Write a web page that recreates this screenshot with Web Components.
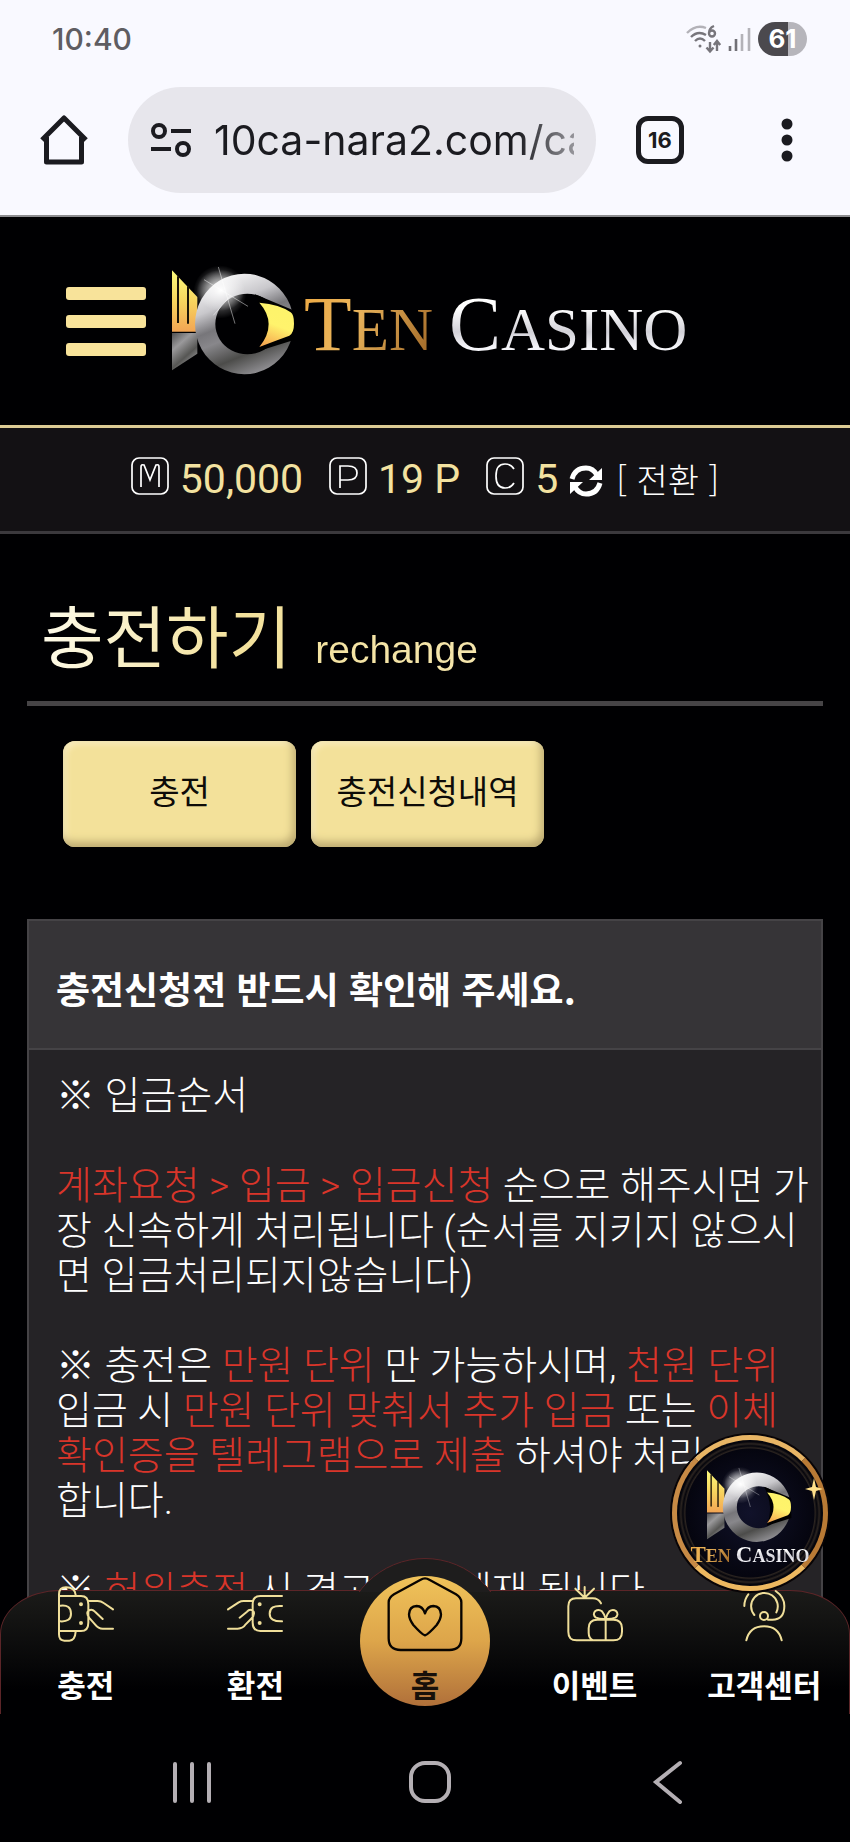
<!DOCTYPE html>
<html lang="ko">
<head>
<meta charset="utf-8">
<meta name="viewport" content="width=device-width, initial-scale=1">
<title>TEN CASINO</title>
<style>
  body {
    margin: 0;
    background: #000002;
    color: #fff;
    font-family: "Noto Sans CJK KR", sans-serif;
  }
</style>
</head>
<body>
<ten-app>
  <phone-status slot="top" time="10:40" battery="61"></phone-status>
  <browser-bar slot="top" url="10ca-nara2.com/ca" tabs="16"></browser-bar>
  <site-header slot="top"></site-header>
  <balance-bar slot="top"></balance-bar>

  <page-title sub="rechange">충전하기</page-title>
  <tab-buttons>
    <gold-button>충전</gold-button>
    <gold-button>충전신청내역</gold-button>
  </tab-buttons>
  <notice-panel>
    <span slot="title">충전신청전 반드시 확인해 주세요.</span>
    ※ 입금순서<br><br>
    <red-text>계좌요청 &gt; 입금 &gt; 입금신청</red-text> 순으로 해주시면 가<br>장 신속하게 처리됩니다 (순서를 지키지 않으시<br>면 입금처리되지않습니다)<br><br>
    ※ 충전은 <red-text>만원 단위</red-text> 만 가능하시며, <red-text>천원 단위</red-text><br>입금 시 <red-text>만원 단위 맞춰서 추가 입금</red-text> 또는 <red-text>이체</red-text><br><red-text>확인증을 텔레그램으로 제출</red-text> 하셔야 처리<br>합니다.<br><br>
    ※ <red-text>허위충전</red-text> 시 경고없이 제재 됩니다
  </notice-panel>

  <bottom-nav slot="bottom"></bottom-nav>
  <round-badge slot="bottom"></round-badge>
  <system-keys slot="bottom"></system-keys>
</ten-app>

<script>
// small helper: every element here is a template in an open shadow root
class BaseElement extends HTMLElement {
  constructor() {
    super();
    this.attachShadow({ mode: "open" });
  }
  connectedCallback() {
    this.shadowRoot.innerHTML = this.render();
  }
}

class TenApp extends BaseElement {
  render() {
    return `
      <style>
        :host { display: flex; flex-direction: column; height: 100vh; position: relative; overflow: hidden; }
        main { flex: 1; min-height: 0; overflow: hidden; padding: 55px 27px 0; }
      </style>
      <slot name="top"></slot>
      <main><slot></slot></main>
      <slot name="bottom"></slot>`;
  }
}
customElements.define("ten-app", TenApp);

class PhoneStatus extends BaseElement {
  render() {
    return `
      <style>
        :host { display: flex; align-items: center; height: 78px; padding: 0 43px 0 52px; background: #f9f9ff; color: #5f5d62; font: 500 30px/32px Inter, sans-serif; }
        .icons { margin-left: auto; display: flex; align-items: center; gap: 6px; }
        .battery { width: 49px; border-radius: 17px; background: linear-gradient(90deg, #4b494e 61%, #b6b5bb 0); color: #fff; font: 700 26px/34px Inter, sans-serif; text-align: center; }
      </style>
      <span>${this.getAttribute("time")}</span>
      <div class="icons">
        <svg width="36" height="30" viewBox="0 0 36 30" fill="none" stroke="#77757b" stroke-width="2.4">
          <path stroke="#b3b2b8" d="M1 9Q10 0 20 4"/>
          <path d="M5 13Q12 6 20 11M9 17Q14 12 19 17M24 18v9M20.500 23.500l3.500 4 3.500-4M31 27v-9M27.800 21l3.200-4 3.200 4"/>
          <circle cx="14" cy="22" r="1.500" fill="#77757b" stroke="none"/>
          <path d="M28 2Q23 4 23 9M23 9.500a3 3 0 1 0 6 0a3 3 0 1 0-6 0"/>
        </svg>
        <svg width="24" height="26" viewBox="0 0 24 26" stroke-width="2.600" stroke="#717076">
          <path d="M2 25v-5M8 25V13"/><path stroke="#b3b2b8" d="M14 25V8M21 25V2"/>
        </svg>
        <span class="battery">${this.getAttribute("battery")}</span>
      </div>`;
  }
}
customElements.define("phone-status", PhoneStatus);

class BrowserBar extends BaseElement {
  render() {
    return `
      <style>
        :host { display: flex; align-items: center; padding: 9px 56px 22px 40px; background: #f9f9ff; border-bottom: 2px solid #8d8d90; color: #1b1b20; }
        button { display: block; padding: 0; border: 0; background: none; color: inherit; }
        svg { display: block; }
        label { flex: 1; min-width: 0; display: flex; align-items: center; gap: 22px; height: 106px; margin: 0 40px; padding: 0 22px; box-sizing: border-box; border-radius: 53px; background: #e7e6ec; }
        label svg { flex: none; }
        input { flex: 1; min-width: 0; padding: 0; border: 0; outline: 0; background: none; color: inherit; font: 400 41px/56px Inter, sans-serif; -webkit-mask: linear-gradient(90deg, #000 84%, #0006); mask: linear-gradient(90deg, #000 84%, #0006); }
        .tabs { box-sizing: border-box; width: 48px; height: 48px; border: 5px solid; border-radius: 12px; font: 700 22px/38px Inter, sans-serif; }
        .more { margin-left: 96px; }
      </style>
      <button aria-label="home"><svg width="48" height="50" viewBox="0 0 48 50" fill="none" stroke="#1b1b20" stroke-width="5" stroke-linejoin="round"><path d="M2 25L24 3l22 22M6.500 22v25h35V22"/></svg></button>
      <label>
        <svg width="42" height="36" viewBox="0 0 42 36" fill="none" stroke="#1b1b20" stroke-width="4"><circle cx="9" cy="9" r="6"/><circle cx="33" cy="27" r="6"/><path d="M21 9h20M1 27h20"/></svg>
        <input type="text" aria-label="address" value="${this.getAttribute("url")}">
      </label>
      <button class="tabs">${this.getAttribute("tabs")}</button>
      <button class="more" aria-label="menu"><svg width="14" height="44" viewBox="0 0 14 44" fill="#1b1b20"><circle cx="7" cy="6" r="5.500"/><circle cx="7" cy="22" r="5.500"/><circle cx="7" cy="38" r="5.500"/></svg></button>`;
  }
}
customElements.define("browser-bar", BrowserBar);

// the silver "10" mark, used in the header and in the round badge
class TenMark extends BaseElement {
  render() {
    return `
      <style>
        :host { display: block; }
        svg { display: block; width: 100%; overflow: visible; }
      </style>
      <svg viewBox="36 40 366 326">
        <defs>
          <linearGradient id="gold" x1="0" y1="0" x2="0" y2="1"><stop offset="0" stop-color="#fbfa7c"/><stop offset=".5" stop-color="#f8d55e"/><stop offset="1" stop-color="#f2a554"/></linearGradient>
          <linearGradient id="eye" x1=".6" y1="0" x2=".3" y2="1"><stop offset="0" stop-color="#fdf36a"/><stop offset=".5" stop-color="#fff36c"/><stop offset="1" stop-color="#f6a850"/></linearGradient>
          <linearGradient id="ring" x1=".2" y1="0" x2=".6" y2="1"><stop offset="0" stop-color="#fff"/><stop offset=".3" stop-color="#c9c8cc"/><stop offset=".48" stop-color="#77767a"/><stop offset=".6" stop-color="#88878b"/><stop offset=".8" stop-color="#4c4c4a"/><stop offset="1" stop-color="#8f8e92"/></linearGradient>
          <linearGradient id="base" x1="0" y1="0" x2=".6" y2="1"><stop offset="0" stop-color="#4f4f50"/><stop offset=".35" stop-color="#9a999b"/><stop offset=".7" stop-color="#565654"/><stop offset="1" stop-color="#a09fa2"/></linearGradient>
          <radialGradient id="glow"><stop offset="0" stop-color="#fff"/><stop offset=".3" stop-color="#fff" stop-opacity=".6"/><stop offset="1" stop-color="#fff" stop-opacity="0"/></radialGradient>
        </defs>
        <path fill="url(#gold)" d="M36 50L112 130V234H36Z"/>
        <path stroke="#1c1508" stroke-width="6" d="M54 68V208M84 98V210"/>
        <path fill="url(#base)" d="M36 238H112V300L36 350Z"/>
        <circle cx="180" cy="115" r="80" fill="url(#glow)" opacity=".7"/>
        <path fill="url(#ring)" fill-rule="evenodd" d="M253 60a148 151 0 1 0 .1 0ZM262 120a96 91 0 1 1-.1 0Z"/>
        <path fill="#000" d="M285 122L400 170L404 258L296 292Q330 210 285 122Z"/>
        <path fill="url(#eye)" d="M298 147Q360 152 392 176Q402 182 402 210Q402 238 388 246Q344 262 298 280Q354 210 298 147Z"/>
        <ellipse cx="182" cy="110" rx="72" ry="62" fill="url(#glow)"/>
        <path stroke="#fff" stroke-width="2" opacity=".7" d="M175 40L225 210M132 78L264 158M212 126L160 185"/>
      </svg>`;
  }
}
customElements.define("ten-mark", TenMark);

class TenName extends BaseElement {
  render() {
    return `
      <style>
        :host { display: flex; gap: var(--name-gap, 16px); font-family: "Liberation Serif", serif; font-size: var(--small, 61px); line-height: 1; white-space: nowrap; }
        span { background: linear-gradient(115deg, #eda943, #e9b45c 40%, #9d6424); -webkit-background-clip: text; background-clip: text; color: transparent; }
        span + span { background-image: linear-gradient(#fff 30%, #d2d1d8 60%, #f5f5fa 80%); }
        b { font-weight: inherit; font-size: var(--big, 78px); }
      </style>
      <span><b>T</b>EN</span><span><b>C</b>ASINO</span>`;
  }
}
customElements.define("ten-name", TenName);

class SiteHeader extends BaseElement {
  render() {
    return `
      <style>
        :host { display: flex; align-items: center; height: 208px; padding: 0 66px; border-bottom: 3px solid #dccb94; }
        button { display: grid; gap: 15px; width: 80px; padding: 0; border: 0; background: none; flex: none; }
        i { height: 13px; border-radius: 3px; background: #f8e39a; }
        a { display: flex; align-items: center; gap: 10px; margin-left: 26px; text-decoration: none; }
        ten-mark { width: 122px; }
        ten-name { padding-top: 6px; }
      </style>
      <button aria-label="menu"><i></i><i></i><i></i></button>
      <a href="#" aria-label="TEN CASINO"><ten-mark></ten-mark><ten-name></ten-name></a>`;
  }
}
customElements.define("site-header", SiteHeader);

class BalanceBar extends BaseElement {
  render() {
    return `
      <style>
        :host { display: flex; align-items: center; justify-content: center; gap: 26px; height: 106px; padding-bottom: 2px; box-sizing: border-box; background: #131114; border-bottom: 3px solid #3b393d; }
        div { display: flex; align-items: center; gap: 11px; color: #f3e2a0; font: 400 41px/48px Roboto, sans-serif; white-space: nowrap; }
        svg { display: block; margin-bottom: 6px; }
        button { padding: 0; border: 0; background: none; color: #fff; font: 300 34px/40px "Noto Sans CJK KR", sans-serif; display: flex; align-items: center; gap: 13px; }
        button svg { margin: 4px 0 0; }
      </style>
      <div>${this.badge("M10 30V10q0-3 3-2l6 15 6-15q3-1 3 2v20")}<span>50,000</span></div>
      <div>${this.badge("M11 31V9h8q9 0 9 7t-9 7h-8")}<span>19 P</span></div>
      <div>${this.badge("M28 12q-3-5-9-5-9 0-9 12t9 12q6 0 9-5")}<span>5</span>
        <button>
          <svg width="34" height="34" viewBox="0 0 34 34" fill="none" stroke="#fff" stroke-width="5"><path d="M3 15Q6 4 17 4q7 0 11 7M31 19Q28 30 17 30q-7 0-11-7"/><path fill="#fff" stroke="none" d="M33 4v12H20zM1 30V18h13z"/></svg>
          [ 전환 ]
        </button>
      </div>`;
  }
  badge(d) {
    return `<svg width="38" height="38" viewBox="0 0 38 38" fill="none" stroke="#fff" stroke-width="1.700"><rect x="1" y="1" width="36" height="36" rx="7"/><path d="${d}"/></svg>`;
  }
}
customElements.define("balance-bar", BalanceBar);

class PageTitle extends BaseElement {
  render() {
    return `
      <style>
        :host { display: block; border-bottom: 5px solid #464446; }
        h1 { display: flex; align-items: baseline; gap: 24px; width: max-content; margin: 0; padding: 0 14px 22px; font-weight: 400; font-size: 68px; line-height: 90px; background: linear-gradient(100deg, #fffef2, #f3e19c 45%, #f5e6ae); -webkit-background-clip: text; background-clip: text; color: transparent; }
        small { font: 400 39px/48px "Liberation Sans", sans-serif; }
      </style>
      <h1><slot></slot><small>${this.getAttribute("sub")}</small></h1>`;
  }
}
customElements.define("page-title", PageTitle);

class TabButtons extends BaseElement {
  render() {
    return `
      <style>
        :host { display: flex; gap: 15px; padding: 35px 36px 72px; }
      </style>
      <slot></slot>`;
  }
}
customElements.define("tab-buttons", TabButtons);

class GoldButton extends BaseElement {
  render() {
    return `
      <style>
        :host { display: block; }
        button { display: block; width: 233px; height: 106px; padding: 0 0 8px; border: 0; border-radius: 12px; background: #f3e19a; box-shadow: inset -3px -5px 8px #bba970, inset 3px 3px 6px #fbf0c4; color: #0d0b08; font: 400 33px/48px "Noto Sans CJK KR", sans-serif; }
      </style>
      <button><slot></slot></button>`;
  }
}
customElements.define("gold-button", GoldButton);

class NoticePanel extends BaseElement {
  render() {
    return `
      <style>
        :host { display: block; border: 2px solid #454346; background: #252326; }
        h2 { margin: 0; padding: 40px 27px 32px; border-bottom: 2px solid #454346; background: #363437; font-size: 37px; line-height: 55px; font-weight: 700; }
        p { margin: 0; padding: 24px 0 100px 27px; font-family: Roboto, "Noto Sans CJK KR", sans-serif; font-size: 39px; line-height: 45px; font-weight: 300; white-space: nowrap; }
      </style>
      <h2><slot name="title"></slot></h2>
      <p><slot></slot></p>`;
  }
}
customElements.define("notice-panel", NoticePanel);

class RedText extends BaseElement {
  render() {
    return `
      <style>
        :host { display: inline; color: #d9352a; }
      </style>
      <slot></slot>`.trim();
  }
}
customElements.define("red-text", RedText);

class NavItem extends BaseElement {
  render() {
    const home = this.hasAttribute("home");
    return `
      <style>
        :host { display: flex; justify-content: center; align-items: flex-end; position: relative; }
        a { display: flex; flex-direction: column; align-items: center; gap: ${home ? 12 : 22}px; color: ${home ? "#17100a" : "#fff"}; font-size: 31px; line-height: 40px; font-weight: 700; text-decoration: none; white-space: nowrap; }
        svg { display: block; fill: none; stroke: ${home ? "#080400" : "#f0df9a"}; stroke-width: ${home ? 7 : 6}; stroke-linecap: round; stroke-linejoin: round; }
      </style>
      <a href="#">
        <svg width="${home ? 76 : 56}" height="${home ? 76 : 56}" viewBox="${this.getAttribute("box")}"><path d="${this.getAttribute("d")}"/></svg>
        <slot></slot>
      </a>`;
  }
}
customElements.define("nav-item", NavItem);

class BottomNav extends BaseElement {
  render() {
    return `
      <style>
        :host { display: block; position: relative; flex: none; height: 124px; margin-top: -40px; }
        nav { position: relative; display: grid; grid-template: 100% / repeat(5, 1fr); align-items: end; height: 100%; box-sizing: border-box; padding-bottom: 10px; border: 1px solid #5c2528; border-bottom: 0; border-radius: 60px 60px 0 0 / 44px 44px 0 0; background: linear-gradient(#1b1b19, #000002 80%); }
        .bump, .disc { position: absolute; left: 50%; transform: translateX(-50%); border-radius: 50%; }
        .bump { top: -33px; width: 164px; height: 164px; box-sizing: border-box; border: 1px solid #5c2528; background: #1e1d1d; clip-path: inset(0 0 130px 0); }
        .disc { top: -15px; width: 130px; height: 130px; background: linear-gradient(#f0c35a, #dda54a 50%, #b0703a); }
      </style>
      <nav>
        <div class="bump"></div>
        <div class="disc"></div>
        <nav-item box="171 135 168 168" d="M174 160V280Q174 299 190 299H205Q222 299 224 272M174 160Q174 139 195 139Q222 139 224 162M178 165H240Q262 165 262 190V245Q262 270 240 270H178M178 194Q210 190 210 218Q210 243 178 241M237 190a3 3 0 1 0 6 0a3 3 0 1 0-6 0M237 246a3 3 0 1 0 6 0a3 3 0 1 0-6 0M262 180H290Q300 180 308 186L336 205M305 234L282 212Q270 200 260 212Q256 220 266 232L282 250Q292 263 305 263H336">충전</nav-item>
        <nav-item box="680 135 168 168" d="M845 165H780Q757 165 757 190V245Q757 270 780 270H845M845 195Q808 192 808 218Q808 242 845 241M775 190a3 3 0 1 0 6 0a3 3 0 1 0-6 0M775 246a3 3 0 1 0 6 0a3 3 0 1 0-6 0M683 205L715 184Q722 180 730 180H757M718 230L740 212Q750 200 760 212Q764 222 752 234L736 250Q728 263 712 263H683">환전</nav-item>
        <nav-item home box="-39 103 228 228" d="M75 110Q82 110 88 114L168 158Q184 168 184 182V290Q184 325 148 325H2Q-34 325-34 290V182Q-34 168-18 158L62 114Q68 110 75 110ZM75 281Q66 279 40 250Q27 232 27 218Q28 194 50 193Q68 193 75 215Q82 193 100 193Q122 194 123 218Q123 232 110 250Q84 279 75 281Z">홈</nav-item>
        <nav-item box="501 135 168 168" d="M603 187Q595 172 578 172H528Q505 172 505 196V272Q505 298 530 298H640Q666 298 666 272V262Q666 236 640 236H592Q566 236 566 262V275Q566 292 580 298M617 236V298M617 234Q600 235 588 230Q576 220 586 210Q596 203 606 211Q614 220 617 234Q620 220 628 211Q638 203 648 210Q658 220 646 230Q634 235 617 234M554 170V138M554 170L526 143M554 170L582 143">이벤트</nav-item>
        <nav-item box="1011 135 168 168" d="M1042 298Q1052 256 1095 256Q1138 256 1148 298M1083 225a12 12 0 1 0 24 0a12 12 0 1 0-24 0M1107 236H1120Q1156 236 1156 195Q1156 168 1130 150M1066 222A40 40 0 1 1 1132 214M1036 195Q1036 175 1048 160">고객센터</nav-item>
      </nav>`;
  }
}
customElements.define("bottom-nav", BottomNav);

// floats over the notice, above the nav
class RoundBadge extends BaseElement {
  render() {
    return `
      <style>
        :host { position: absolute; right: 22px; bottom: 251px; box-sizing: border-box; width: 156px; height: 156px; padding: 28px 0 0; border: 5px solid #d99b4c; border-color: #e8b565 #b97a35 #edb860 #c78a45; border-radius: 50%; background: radial-gradient(circle, #11122a, #05050f 62%, #2b2420 63%, #05050c 65%, #2b2420 67%, #05050c 69%); box-shadow: 0 0 0 2px #080406; --big: 23px; --small: 18px; --name-gap: 5px; font-weight: 700; }
        ten-mark { width: 84px; margin-left: 30px; }
        ten-name { justify-content: center; }
        svg { position: absolute; right: 0; top: 38px; }
      </style>
      <ten-mark></ten-mark>
      <ten-name></ten-name>
      <svg width="18" height="22" viewBox="0 0 18 22" fill="#ffe08a"><path d="M9 0l2 9 7 2-7 2-2 9-2-9-7-2 7-2z"/></svg>`;
  }
}
customElements.define("round-badge", RoundBadge);

class SystemKeys extends BaseElement {
  render() {
    return `
      <style>
        :host { display: grid; grid-template-columns: repeat(3, 1fr); place-items: center; flex: none; height: 128px; padding: 8px 63px 0 73px; box-sizing: border-box; background: #000002; }
        button { display: block; padding: 0; border: 0; background: none; }
        svg { display: block; fill: none; stroke: #b4afb4; stroke-width: 4; stroke-linecap: round; }
      </style>
      <button aria-label="recent"><svg width="44" height="44" viewBox="0 0 44 44"><path d="M5 4v37M22 4v37M39 4v37"/></svg></button>
      <button aria-label="home"><svg width="44" height="44" viewBox="0 0 44 44"><rect x="3" y="3" width="38" height="38" rx="14"/></svg></button>
      <button aria-label="back"><svg width="44" height="44" viewBox="0 0 44 44"><path d="M34 3L10 22l24 20"/></svg></button>`;
  }
}
customElements.define("system-keys", SystemKeys);
</script>
</body>
</html>
